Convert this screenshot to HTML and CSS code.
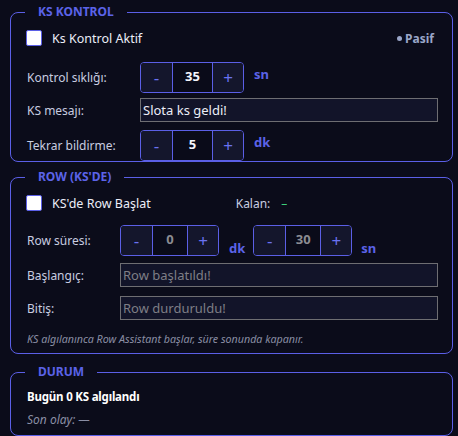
FILE: index.html
```html
<!DOCTYPE html>
<html lang="tr">
<head>
<meta charset="utf-8">
<link rel="stylesheet" href="styles.css">
</head>
<body>
<fieldset class="group g1">
  <legend class="title">KS KONTROL</legend>
  <div class="check-row r-check">
    <span class="box"></span>
    <span class="check-label">Ks Kontrol Aktif</span>
    <span class="status"><span class="dot"></span>Pasif</span>
  </div>
  <div class="form-row r-freq">
    <span class="label">Kontrol sıklığı:</span>
    <div class="stepper s1">
      <span class="btn">-</span><span class="val">35</span><span class="btn">+</span>
    </div>
    <span class="unit top">sn</span>
  </div>
  <div class="form-row r-msg">
    <span class="label">KS mesajı:</span>
    <div class="input">Slota ks geldi!</div>
  </div>
  <div class="form-row r-rep">
    <span class="label">Tekrar bildirme:</span>
    <div class="stepper s1">
      <span class="btn">-</span><span class="val">5</span><span class="btn">+</span>
    </div>
    <span class="unit top">dk</span>
  </div>
</fieldset>

<fieldset class="group g2">
  <legend class="title">ROW (KS'DE)</legend>
  <div class="check-row r-check">
    <span class="box"></span>
    <span class="check-label">KS'de Row Başlat</span>
    <span class="kalan">Kalan:</span>
    <span class="dash">–</span>
  </div>
  <div class="form-row r-dur">
    <span class="label l2">Row süresi:</span>
    <div class="stepper s2 disabled">
      <span class="btn">-</span><span class="val">0</span><span class="btn">+</span>
    </div>
    <span class="unit bottom dk2">dk</span>
    <div class="stepper s2 disabled">
      <span class="btn">-</span><span class="val">30</span><span class="btn">+</span>
    </div>
    <span class="unit bottom sn2">sn</span>
  </div>
  <div class="form-row r-start">
    <span class="label l2">Başlangıç:</span>
    <div class="input placeholder">Row başlatıldı!</div>
  </div>
  <div class="form-row r-end">
    <span class="label l2">Bitiş:</span>
    <div class="input placeholder">Row durduruldu!</div>
  </div>
  <p class="note">KS algılanınca Row Assistant başlar, süre sonunda kapanır.</p>
</fieldset>

<fieldset class="group g3">
  <legend class="title">DURUM</legend>
  <p class="today">Bugün 0 KS algılandı</p>
  <p class="last">Son olay: —</p>
</fieldset>
</body>
</html>
```

FILE: styles.css
```css
* { box-sizing: border-box; }
html, body {
  margin: 0;
  padding: 0;
  background: #0b0c1a;
  height: 436px;
  overflow: hidden;
}
body {
  font-family: "Noto Sans", "Open Sans", sans-serif;
  font-size: 12px;
  color: #c8cce0;
}
.group {
  margin: 0 5px 0 10px;
  padding: 0 14px 0 16px;
  border: 1px solid #5b5fe6;
  border-radius: 8px;
  min-width: 0;
}
.g1 { margin-top: 4px; }
.g2 { margin-top: 7px; padding-bottom: 7px; }
.g3 { margin-top: 10px; padding-bottom: 7px; }
.title {
  margin-left: -2px;
  padding: 0 13px;
  font-weight: 700;
  font-size: 12px;
  line-height: 16px;
  color: #5b63e8;
}
.check-row {
  display: flex;
  align-items: center;
  height: 18px;
  margin-top: 9px;
}
.box {
  width: 16px;
  height: 16px;
  margin-left: -1px;
  background: #ffffff;
  border: 1px solid #5b5fe6;
  border-radius: 2px;
  flex: none;
}
.check-label {
  margin-left: 10px;
  font-size: 12.5px;
  color: #eceef8;
}
.status {
  display: flex;
  align-items: center;
  margin-left: auto;
  margin-right: 4px;
  font-weight: 700;
  color: #9aa6c8;
}
.dot {
  width: 5px;
  height: 5px;
  border-radius: 50%;
  background: #9aa6c8;
  margin-right: 3px;
}
.kalan {
  margin-left: 85px;
  color: #c8cce0;
}
.dash {
  margin-left: 11px;
  color: #3ccf7a;
}
.form-row {
  display: flex;
  align-items: center;
}
.label {
  width: 113px;
  flex: none;
}
.label.l2 { width: 93px; }
.r-freq { margin-top: 15px; }
.r-msg { margin-top: 5px; }
.r-rep { margin-top: 8px; }
.r-dur { margin-top: 13px; }
.r-start { margin-top: 7px; }
.r-end { margin-top: 9px; }
.stepper {
  display: flex;
  height: 31px;
  border: 1px solid #5b5fe6;
  border-radius: 4px;
  overflow: hidden;
  flex: none;
}
.btn {
  display: flex;
  align-items: center;
  justify-content: center;
  background: #14162c;
  color: #6a72f0;
  font-size: 17px;
  width: 31px;
}
.btn:last-child { width: 31px; border-left: 1px solid #5b5fe6; }
.val {
  display: flex;
  align-items: center;
  justify-content: center;
  background: #0a0b19;
  border-left: 1px solid #5b5fe6;
  font-weight: 700;
  font-size: 13px;
  color: #f4f5fb;
  padding-bottom: 4px;
}
.s1 .val { width: 40px; }
.s2 .val { width: 35px; }
.s2.disabled .val { color: #8c8c92; }
.unit {
  font-weight: 700;
  font-size: 13px;
  color: #5b63e8;
}
.unit.top {
  margin-left: 10px;
  margin-bottom: 8px;
}
.unit.bottom {
  align-self: flex-end;
  margin-bottom: -1px;
}
.dk2 { margin-left: 10px; margin-right: 8px; }
.sn2 { margin-left: 9px; }
.input {
  flex: 1;
  height: 24px;
  line-height: 22px;
  padding: 0 2px;
  background: #121429;
  border: 1px solid #6e6e72;
  color: #eceef8;
  font-size: 13px;
}
.input.placeholder { color: #7e7e86; }
.note {
  margin: 12px 0 0;
  font-style: italic;
  font-size: 10.7px;
  line-height: 14px;
  color: #8a8ea4;
}
.today {
  margin: 9px 0 0;
  font-weight: 700;
  font-size: 11.5px;
  letter-spacing: -0.2px;
  line-height: 16px;
  color: #ffffff;
}
.last {
  margin: 7px 0 0;
  font-style: italic;
  font-size: 12px;
  line-height: 16px;
  color: #8a8ea4;
}
```
